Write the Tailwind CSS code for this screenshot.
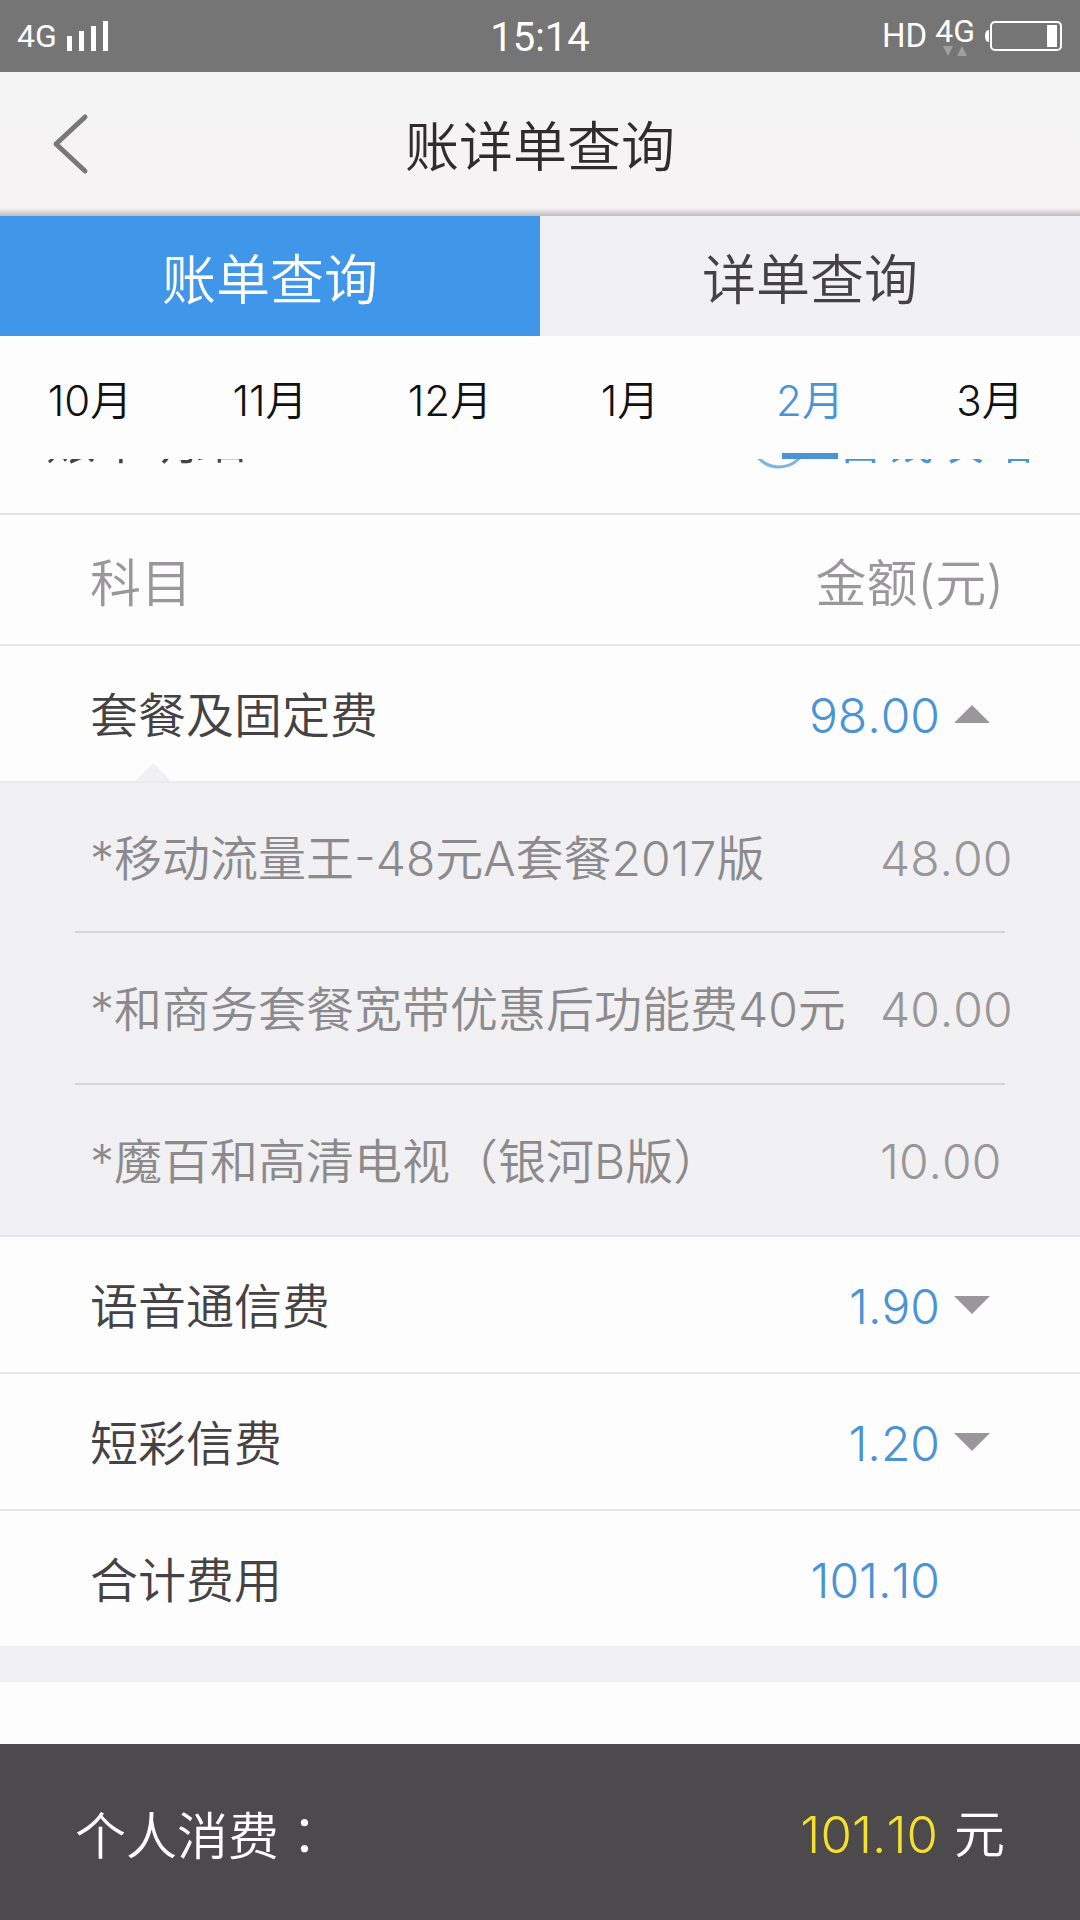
<!DOCTYPE html>
<html lang="zh-CN">
<head>
<meta charset="utf-8">
<meta name="viewport" content="width=device-width, initial-scale=1">
<title>账详单查询</title>
<script src="https://cdn.jsdelivr.net/npm/@tailwindcss/browser@4"></script>
</head>
<body class="flex min-h-screen flex-col bg-[#fdfdfd] font-['Inter','Noto_Sans_CJK_SC',sans-serif] font-[350] text-[#444244] [font-kerning:none]">

<!-- Status bar -->
<div class="grid h-[72px] shrink-0 grid-cols-3 items-center bg-[#757575] px-[17px] font-['Roboto',sans-serif] font-normal text-white">
  <div class="flex items-center gap-[10px]">
    <span class="text-[32px] leading-[32px]">4G</span>
    <svg class="h-[30px] w-[42px]" viewBox="0 0 42 30" fill="#fff" aria-hidden="true"><path d="M0 15h5v15H0zM12 10h5v20h-5zM24 5h5v25h-5zM36 0h5v30h-5z"/></svg>
  </div>
  <div class="pt-1 text-center text-[40px] leading-[40px]">15:14</div>
  <div class="flex items-center justify-end gap-2">
    <span class="text-[33px] leading-[34px]">HD</span>
    <span class="flex flex-col items-center">
      <span class="text-[32px] leading-[30px]">4G</span>
      <svg class="h-[10px] w-[24px]" viewBox="0 0 24 10" fill="#a0a0a0" aria-hidden="true"><path d="M0 0h10L5 10zM14 10h10L19 0z"/></svg>
    </span>
    <svg class="ml-[2px] h-[30px] w-[78px]" viewBox="0 0 78 30" aria-hidden="true"><rect x="6" y="1" width="70" height="28" rx="4" fill="none" stroke="#fff" stroke-width="2"/><path d="M4 9C1 9 0 12 0 15s1 6 4 6z" fill="#fff"/><path d="M62 4h10v22H62z" fill="#fff"/></svg>
  </div>
</div>

<!-- Title bar -->
<header class="shrink-0 bg-linear-to-b from-[#f4f4f5] to-[#f6f3f4]">
  <div class="grid h-[136px] grid-cols-[120px_1fr_120px] items-center">
    <button type="button" aria-label="返回" class="flex h-full items-center pt-2 pl-[51px]">
      <svg class="h-[64px] w-[40px]" viewBox="0 0 40 64" fill="none" stroke="#787878" stroke-width="5" stroke-linecap="round" stroke-linejoin="round"><path d="M34 5 5 32l29 27"/></svg>
    </button>
    <h1 class="pt-4 text-center text-[54px] leading-[72px] text-[#302c2d]">账详单查询</h1>
  </div>
  <div class="h-2 bg-linear-to-b from-[#f4f2f3] to-[#c0bec0]"></div>
</header>

<!-- Bill / detail tabs -->
<nav class="grid shrink-0 grid-cols-2">
  <button type="button" class="h-[120px] bg-[#4096e9] pt-2 text-[54px] text-white">账单查询</button>
  <button type="button" class="h-[120px] bg-[#f1f0f3] pt-2 text-[54px]">详单查询</button>
</nav>

<!-- Months -->
<nav class="grid h-[123px] shrink-0 grid-cols-6 text-[42px] text-[#111]">
  <button type="button" class="pt-[6px]">10月</button>
  <button type="button" class="pt-[6px]">11月</button>
  <button type="button" class="pt-[6px]">12月</button>
  <button type="button" class="pt-[6px]">1月</button>
  <button type="button" class="relative pt-[6px] text-[#4a93d5]">2月<span class="absolute bottom-0 left-1/2 h-[6px] w-[56px] -translate-x-1/2 bg-[#4a93d5]"></span></button>
  <button type="button" class="pt-[6px]">3月</button>
</nav>

<main class="grow">
  <!-- Section heading, scrolled partly under the month bar -->
  <div class="flex h-[56px] flex-col justify-end overflow-hidden border-b-2 border-[#e3e3e3]">
    <div class="flex h-[144px] shrink-0 items-center justify-between px-[46px] text-[50px] leading-[60px]">
      <h2>账单明细</h2>
      <a href="#" class="flex items-center gap-[22px] text-[#4a93d5]">
        <svg class="h-[60px] w-[66px] overflow-visible" viewBox="0 0 66 60" fill="none" stroke="#7db4e2" stroke-width="3" aria-hidden="true"><circle cx="33" cy="28" r="28"/><path d="M23 12l10 14 10-14M22 26h22M22 34h22M33 26v18"/></svg>
        省钱攻略
      </a>
    </div>
  </div>

  <table class="w-full table-fixed border-collapse text-[48px] leading-[60px] whitespace-nowrap">
    <colgroup><col><col class="w-[80px]"><col class="w-[200px]"></colgroup>
    <thead>
      <tr class="h-[130px] border-b-2 border-[#e6e6e6] text-[51px] text-[#999799]">
        <th scope="col" class="p-0 pt-2 pl-[90px] text-left font-[350]">科目</th>
        <th scope="col" colspan="2" class="p-0 pt-2 pr-[76px] text-right font-[350]">金额(元)</th>
      </tr>
    </thead>
    <tbody>
      <tr class="h-[137px] border-b-2 border-[#ebebed]">
        <th scope="row" class="relative p-0 pt-1 pl-[90px] text-left font-[350]">套餐及固定费
          <svg class="absolute bottom-0 left-[135px] h-[18px] w-[36px]" viewBox="0 0 36 18" fill="#f1f0f3" aria-hidden="true"><path d="M18 0 36 18H0z"/></svg>
        </th>
        <td colspan="2" class="p-0 pr-[90px]">
          <div class="flex items-center justify-end gap-[14px] text-[#4a93d5]"><span class="pt-1">98.00</span>
            <button type="button" aria-label="收起"><svg class="h-[18px] w-[36px]" viewBox="0 0 36 18" fill="#999799"><path d="M18 0 36 18H0z"/></svg></button>
          </div>
        </td>
      </tr>
    </tbody>
    <tbody class="bg-[#f1f0f3] text-[#8c8a8c]">
      <tr>
        <td colspan="2" class="p-0 pl-[75px]"><div class="flex h-[150px] items-center border-b-2 border-[#d6d5d8] pt-1 pl-[15px]">*移动流量王-48元A套餐2017版</div></td>
        <td class="p-0 pr-[75px]"><div class="flex h-[150px] items-center border-b-2 border-[#d6d5d8] pt-1 text-[#999799]">48.00</div></td>
      </tr>
      <tr>
        <td colspan="2" class="p-0 pl-[75px]"><div class="flex h-[152px] items-center border-b-2 border-[#d6d5d8] pt-1 pl-[15px]">*和商务套餐宽带优惠后功能费40元</div></td>
        <td class="p-0 pr-[75px]"><div class="flex h-[152px] items-center border-b-2 border-[#d6d5d8] pt-1 text-[#999799]">40.00</div></td>
      </tr>
      <tr class="border-b-2 border-[#e6e6e8]">
        <td colspan="2" class="p-0 pl-[75px]"><div class="flex h-[150px] items-center pt-1 pl-[15px]">*魔百和高清电视（银河B版）</div></td>
        <td class="p-0 pr-[75px]"><div class="flex h-[150px] items-center pt-1 text-[#999799]">10.00</div></td>
      </tr>
    </tbody>
    <tbody>
      <tr class="h-[137px] border-b-2 border-[#e6e6e6]">
        <th scope="row" class="p-0 pt-1 pl-[90px] text-left font-[350]">语音通信费</th>
        <td colspan="2" class="p-0 pr-[90px]">
          <div class="flex items-center justify-end gap-[14px] text-[#4a93d5]"><span class="pt-1">1.90</span>
            <button type="button" aria-label="展开"><svg class="h-[18px] w-[36px]" viewBox="0 0 36 18" fill="#999799"><path d="M18 18 36 0H0z"/></svg></button>
          </div>
        </td>
      </tr>
      <tr class="h-[137px] border-b-2 border-[#e6e6e6]">
        <th scope="row" class="p-0 pt-1 pl-[90px] text-left font-[350]">短彩信费</th>
        <td colspan="2" class="p-0 pr-[90px]">
          <div class="flex items-center justify-end gap-[14px] text-[#4a93d5]"><span class="pt-1">1.20</span>
            <button type="button" aria-label="展开"><svg class="h-[18px] w-[36px]" viewBox="0 0 36 18" fill="#999799"><path d="M18 18 36 0H0z"/></svg></button>
          </div>
        </td>
      </tr>
      <tr class="h-[136px]">
        <th scope="row" class="p-0 pt-1 pl-[90px] text-left font-[350]">合计费用</th>
        <td colspan="2" class="p-0 pt-1 pr-[140px] text-right text-[#4a93d5]">101.10</td>
      </tr>
    </tbody>
  </table>
  <div class="h-[36px] bg-[#f1f0f3]"></div>
</main>

<!-- Total -->
<footer class="sticky bottom-0 flex h-[176px] shrink-0 items-center justify-between bg-[#4c4a4c] px-[75px] pt-[6px] text-[51px] leading-[60px] text-white">
  <span>个人消费<span class="font-['Noto_Sans_CJK_TC',sans-serif]" lang="zh-TW">：</span></span>
  <span class="flex gap-4"><span class="text-[#f5df2f]">101.10</span>元</span>
</footer>
</body>
</html>
